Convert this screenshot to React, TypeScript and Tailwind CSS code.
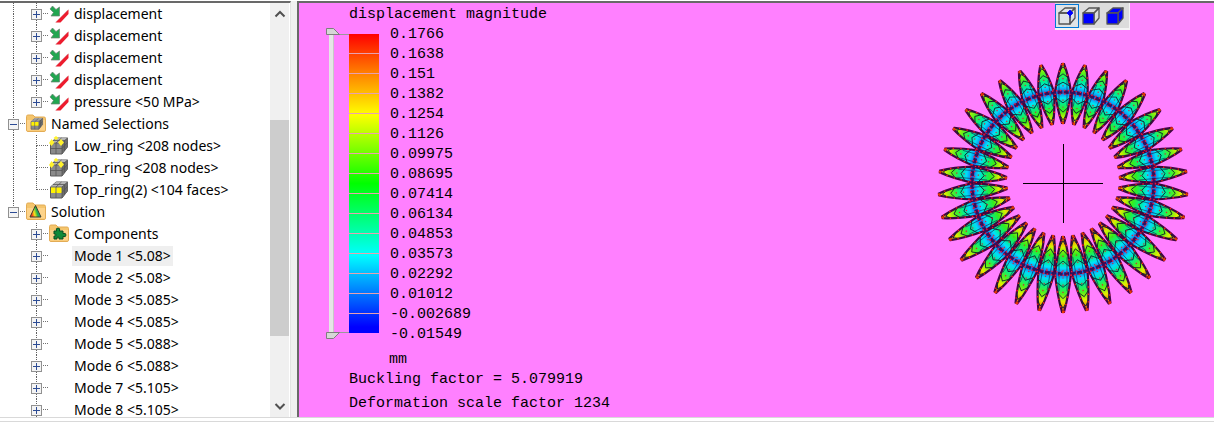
import type { ReactNode } from "react";

const LoadIcon = () => (
  <svg className="h-5 w-5 shrink-0" viewBox="0 0 20 20" aria-hidden="true">
    <path d="M6 19l1-1.500L18 6.500l2-1z" fill="#c4c4c4" />
    <path d="M6.500 18.500h5L19.500 10V5.500z" fill="#ed1c2e" />
    <path d="M3.500 2l3.500 3.500L10.500 3v9H2l2.500-3.500L1 5z" fill="#22a651" stroke="#6d8274" strokeWidth="0.7" />
  </svg>
);

const Cube = ({ faces }: { faces?: boolean }) => (
  <>
    <path d="M1.5 7L7 2h11.5v9L13 18H1.5z" fill="#8a8a8a" stroke="#5c5c5c" />
    <path d="M1.5 7L7 2h11.5L13 7z" fill="#b4b4b4" />
    <path d="M13 7l5.500-5v9L13 18z" fill="#6c6c6c" />
    <path
      d="M1.5 7H13M1.5 12.5H13l5.500-6M7 7v11M13 7v11M7 7l5.500-5M13 7l5.500-5M4 4.5h11.5V15"
      fill="none"
      stroke="#555"
      strokeWidth="0.8"
    />
    {faces ? (
      <path d="M2 7.5h4.500V13H2zM7.5 7.5h5V13h-5z" fill="#fff200" />
    ) : (
      <path d="M2.500 3l3 3.500-3 3.500L0 7zM12 3l3 3.500-3 3.500-3-3.500zM7 0l2.500 2L7 4 4.500 2z" fill="#fff22d" />
    )}
  </>
);

const CubeIcon = ({ faces }: { faces?: boolean }) => (
  <svg className="h-5 w-5 shrink-0" viewBox="0 0 20 20" aria-hidden="true">
    <Cube faces={faces} />
  </svg>
);

const FolderIcon = ({ children }: { children: ReactNode }) => (
  <svg className="h-5 w-5 shrink-0" viewBox="0 0 20 20" aria-hidden="true">
    <path d="M.5 2.5Q.5 1 2 1h5l2 2h9q1.5 0 1.5 1.5V16q0 1.5-1.5 1.5H2Q.5 17.5.5 16z" fill="#f5c56c" stroke="#e3ac55" />
    <path d="M1 6h18v10.5H1z" fill="#fdd38a" />
    {children}
  </svg>
);

const NamedSelectionsIcon = () => (
  <FolderIcon>
    <g transform="translate(4 3) scale(.68)">
      <Cube faces />
    </g>
  </FolderIcon>
);

const SolutionIcon = () => (
  <FolderIcon>
    <defs>
      <linearGradient id="solution" x1="0" y1="1" x2="1" y2="0.7">
        <stop offset="0.2" stopColor="#f33a1d" />
        <stop offset="0.45" stopColor="#f6e51b" />
        <stop offset="0.7" stopColor="#22b14c" />
        <stop offset="1" stopColor="#1596c4" />
      </linearGradient>
    </defs>
    <path d="M9.5 3.5L15 15H4z" fill="url(#solution)" stroke="#3b3b2b" />
  </FolderIcon>
);

const ComponentsIcon = () => (
  <FolderIcon>
    <path
      d="M5 7h2.5q-1-3 1.5-3t1.5 3H14v2.5q3-1 3 1.500t-3 1.5V15h-4q.5-2-1-2t-1 2H5v-3q2 .5 2-1t-2-1z"
      fill="#118a3a"
      stroke="#0b4d22"
    />
  </FolderIcon>
);

type Item = {
  label: string;
  depth: 1 | 2;
  icon?: ReactNode;
  toggle?: "+" | "-";
  selected?: boolean;
  last?: boolean;
};

const displacement: Item = { label: "displacement", depth: 2, icon: <LoadIcon />, toggle: "+" };

const modes = ["5.08", "5.08", "5.085", "5.085", "5.088", "5.088", "5.105", "5.105"];

const items: Item[] = [
  displacement,
  displacement,
  displacement,
  displacement,
  { label: "pressure <50 MPa>", depth: 2, icon: <LoadIcon />, toggle: "+", last: true },
  { label: "Named Selections", depth: 1, icon: <NamedSelectionsIcon />, toggle: "-" },
  { label: "Low_ring <208 nodes>", depth: 2, icon: <CubeIcon /> },
  { label: "Top_ring <208 nodes>", depth: 2, icon: <CubeIcon /> },
  { label: "Top_ring(2) <104 faces>", depth: 2, icon: <CubeIcon faces />, last: true },
  { label: "Solution", depth: 1, icon: <SolutionIcon />, toggle: "-", last: true },
  { label: "Components", depth: 2, icon: <ComponentsIcon />, toggle: "+" },
  ...modes.map((value, i): Item => ({
    label: `Mode ${i + 1} <${value}>`,
    depth: 2,
    toggle: "+",
    selected: i === 0,
  })),
];

const solutionIndex = items.findIndex((item) => item.label === "Solution");

// One 23px wide column of the tree, with its dotted guide lines
const Guide = ({ up, down, across, toggle }: { up?: boolean; down?: boolean; across?: boolean; toggle?: "+" | "-" }) => (
  <span className="grid h-[22px] w-[23px] shrink-0 grid-cols-[12px_11px] grid-rows-2">
    <span className={`col-start-1 row-start-1 ${up ? "border-r border-dotted border-[#606060]" : ""}`} />
    <span className={`col-start-2 row-start-1 ${across ? "border-b border-dotted border-[#707070]" : ""}`} />
    <span className={`col-start-1 row-start-2 ${down ? "border-r border-dotted border-[#606060]" : ""}`} />
    {toggle && (
      <button
        type="button"
        aria-label={toggle === "+" ? "Expand" : "Collapse"}
        className="z-10 col-start-1 row-span-2 row-start-1 ml-[6px] flex h-[11px] w-[11px] items-center justify-center self-center border border-[#919191] bg-[#f4f4f4]"
      >
        <svg className="h-[9px] w-[9px] shrink-0" viewBox="0 0 9 9" stroke="#2c4b94" aria-hidden="true">
          <path d={toggle === "+" ? "M1 4.5h7M4.5 1v7" : "M1 4.5h7"} />
        </svg>
      </button>
    )}
  </span>
);

const TreeRow = ({ item, index }: { item: Item; index: number }) => (
  <li className="flex h-[22px] items-center pl-[2px]">
    {item.depth === 1 ? (
      <Guide up down={!item.last} across toggle={item.toggle} />
    ) : (
      <>
        <Guide up={index < solutionIndex} down={index < solutionIndex} />
        <Guide up down={!item.last} across toggle={item.toggle} />
      </>
    )}
    <span className="flex w-6 shrink-0 items-center pl-px">{item.icon}</span>
    <span className={`whitespace-pre px-[2px] leading-5 ${item.selected ? "bg-[#efefef]" : ""}`}>{item.label}</span>
  </li>
);

const ScrollArrow = ({ label, d }: { label: string; d: string }) => (
  <button type="button" aria-label={label} className="flex h-[22px] items-center justify-center">
    <svg className="h-3 w-3" viewBox="0 0 12 12" fill="none" stroke="#505050" strokeWidth="2" aria-hidden="true">
      <path d={d} />
    </svg>
  </button>
);

const ScrollBar = () => (
  <div className="flex w-5 shrink-0 flex-col border-r border-white bg-[#f0f0f0]">
    <ScrollArrow label="Scroll up" d="M1.5 8.5L6 4l4.500 4.500" />
    <div className="flex flex-1 flex-col">
      <div className="grow-[95]" />
      <div className="grow-[216] bg-[#cdcdcd]" />
      <div className="grow-[59]" />
    </div>
    <ScrollArrow label="Scroll down" d="M1.5 4L6 8.5 10.500 4" />
  </div>
);

const levels = [
  "0.1766", "0.1638", "0.151", "0.1382", "0.1254", "0.1126", "0.09975", "0.08695",
  "0.07414", "0.06134", "0.04853", "0.03573", "0.02292", "0.01012", "-0.002689", "-0.01549",
];

const RangeSlider = () => (
  <div className="relative mt-[3px] h-[312px] w-[23px]">
    <svg className="h-full w-full" viewBox="0 0 23 312" aria-hidden="true">
      <path d="M3 6h5v299H3z" fill="#e6e6e6" />
      <path d="M7 6h1v299H7z" fill="#c8c8c8" />
      <path d="M12 6.5h11M12 304.5h11" stroke="#999" />
      <path d="M.5.5h7l6 6H.5zM.5 304.5h13l-6 6H.5z" fill="#d6d6d6" stroke="#7e7e7e" />
    </svg>
    <input
      type="range"
      aria-label="Upper limit"
      defaultValue={100}
      className="absolute left-0 top-0 h-1/2 w-3 opacity-0 [direction:rtl] [writing-mode:vertical-lr]"
    />
    <input
      type="range"
      aria-label="Lower limit"
      defaultValue={0}
      className="absolute bottom-0 left-0 h-1/2 w-3 opacity-0 [direction:rtl] [writing-mode:vertical-lr]"
    />
  </div>
);

const Legend = () => (
  <div className="flex">
    <RangeSlider />
    <div className="mt-[9px] flex h-[299px] w-[30px] flex-col bg-[linear-gradient(#ff0000,#ff8000_13%,#ffff00_27%,#00ff00_50%,#00ffff_74%,#0000ff_98%)]">
      {levels.slice(1).map((level, i) => (
        <span key={level} className={i < 14 ? "h-5 border-b border-[#e8a0b0]" : ""} />
      ))}
    </div>
    <ul className="pl-[11px]">
      {levels.map((level) => (
        <li key={level} className="h-5 leading-5">
          {level}
        </li>
      ))}
    </ul>
  </div>
);

const LOBES = 34;
const RING = 91;

const Lobe = ({ index }: { index: number }) => {
  const turn = (index * 360) / LOBES;
  const lean = Math.cos((turn * Math.PI) / 180);
  const out = 124 - 5 * lean;
  const inn = 57 + 3 * lean;
  const at = (t: number) => -(RING + (t > 0 ? (out - RING) * t : (RING - inn) * t));
  const half = (t: number) => (t > 0 ? 7 : 6) * (1 - Math.abs(t) ** 1.5) + 1;
  const chevrons = [-0.75, -0.5, -0.2, 0.2, 0.5, 0.75]
    .map((t) => {
      const tip = at(t + Math.sign(t) * 0.15);
      return `M${-half(t)} ${at(t)}L0 ${tip}L${half(t)} ${at(t)}`;
    })
    .join("");
  const outline = `M-1 ${at(1)}Q-5.5 ${at(0.6)} -8 ${at(0)}Q-5.5 ${at(-0.6)} -1 ${at(-1)}H1Q5.5 ${at(-0.6)} 8 ${at(0)}Q5.5 ${at(0.6)} 1 ${at(1)}z`;
  return (
    <g transform={`rotate(${turn})`}>
      <path d={outline} fill="url(#field)" stroke="#3f0640" strokeWidth="2.2" />
      <path d={chevrons} fill="none" stroke="#10282c" strokeWidth="0.9" />
      <path d={`M-4 ${at(0.45)}V${at(-0.45)}M4 ${at(0.45)}V${at(-0.45)}`} stroke="#102c4c" strokeWidth="0.6" />
      <path d={outline} fill="none" stroke="#ff1717" strokeWidth="1.4" strokeDasharray="1.4 6" />
      <path d={`M0 ${at(0.5)}V${at(-0.5)}`} stroke="#e01a30" strokeWidth="1.2" strokeDasharray="1.2 6" />
      <path d={`M-1 ${at(1)}h2M-1 ${at(-1)}h2`} stroke="#e53a00" strokeWidth="2.5" />
    </g>
  );
};

const RingModel = () => (
  <svg className="h-[260px] w-[260px]" viewBox="-130 -125 260 260" role="img" aria-label="Deformed ring">
    <defs>
      <radialGradient id="field" gradientUnits="userSpaceOnUse" cx="0" cy="0" r="129">
        <stop offset="0.44" stopColor="#ff7a00" />
        <stop offset="0.5" stopColor="#d9f000" />
        <stop offset="0.56" stopColor="#35ee1a" />
        <stop offset="0.62" stopColor="#00ee90" />
        <stop offset="0.66" stopColor="#00e4fa" />
        <stop offset="0.705" stopColor="#1668ec" />
        <stop offset="0.75" stopColor="#00dcfa" />
        <stop offset="0.8" stopColor="#00ee90" />
        <stop offset="0.86" stopColor="#4ff01c" />
        <stop offset="0.92" stopColor="#e4f000" />
        <stop offset="0.98" stopColor="#ff7a00" />
      </radialGradient>
    </defs>
    {Array.from({ length: LOBES }, (_, i) => (
      <Lobe key={i} index={i} />
    ))}
    <circle r={RING} fill="none" stroke="#35105a" strokeWidth="3.500" strokeDasharray="5 1.500" />
    <circle r={RING + 1.5} fill="none" stroke="#f5123a" strokeWidth="1.5" strokeDasharray="1.5 2.5" />
    <circle r={RING - 2} fill="none" stroke="#f5123a" strokeWidth="1.3" strokeDasharray="1.5 3.5" />
    <path d="M-40 .5H40M.5-39V40" stroke="#000" shapeRendering="crispEdges" />
  </svg>
);

const viewModes = [
  { label: "Select nodes", front: "none", sides: "none", dot: true },
  { label: "Select faces", front: "#0000ff", sides: "none", dot: false },
  { label: "Select bodies", front: "#0000ff", sides: "#0000ff", dot: false },
];

const ViewToolbar = () => (
  <div className="absolute right-[84px] top-0 flex h-[27px] w-[75px] border-b-2 border-r border-[#f4f4f4] bg-[#dcdcdc]">
    {viewModes.map(({ label, front, sides, dot }) => (
      <button
        key={label}
        type="button"
        aria-label={label}
        className={`mt-px flex h-6 w-6 items-center justify-center border ${dot ? "border-[#0078d7] bg-[#dfe3e6]" : "border-transparent"}`}
      >
        <svg className="h-5 w-5 shrink-0" viewBox="0 0 20 20" aria-hidden="true">
          <g stroke="#555" strokeWidth="1.3" strokeLinejoin="round">
            <path d="M2 7l6-5h10l-5 5z" fill={sides} />
            <path d="M13 7l5-5v10l-5 6z" fill={sides} />
            <path d="M2 7h11v11H2z" fill={front} />
          </g>
          {dot && <path d="M13 4l3 3-3 3-3-3zM13 7v5" fill="#0000ff" stroke="#0000ff" strokeWidth="0.8" />}
        </svg>
      </button>
    ))}
  </div>
);

const App = () => {
  return (
    <div className="flex h-screen flex-col overflow-hidden bg-white">
      <div className="flex min-h-0 flex-1 border-b border-[#d9d9d9] pt-px">
        <nav
          aria-label="Model tree"
          className="flex w-[291px] shrink-0 overflow-hidden border-r border-t-2 border-r-[#e3e3e3] border-t-[#696969] bg-white font-['Noto_Sans','Open_Sans',sans-serif] text-[14px] text-black"
        >
          <ul className="min-w-0 flex-1">
            {items.map((item, i) => (
              <TreeRow key={i} item={item} index={i} />
            ))}
          </ul>
          <ScrollBar />
        </nav>
        <div className="w-[6px] shrink-0 bg-[#f0f0f0]" />
        <main className="relative flex min-w-0 flex-1 justify-between overflow-hidden border-l-2 border-t-2 border-[#696969] bg-[#ff80ff] pl-[27px] font-['Liberation_Mono',monospace] text-[15px] text-black">
          <section aria-label="Results" className="pt-[2px]">
            <h1 className="pl-[23px] leading-5">displacement magnitude</h1>
            <Legend />
            <p className="mt-[5px] pl-[63px] leading-5">mm</p>
            <p className="pl-[23px] leading-5">Buckling factor = 5.079919</p>
            <p className="mt-1 pl-[23px] leading-5">Deformation scale factor 1234</p>
          </section>
          <div className="pr-[21px] pt-[55px]">
            <RingModel />
          </div>
          <ViewToolbar />
        </main>
      </div>
      <div className="h-1 shrink-0 border-b border-[#d9d9d9]" />
    </div>
  );
};

export default App;
